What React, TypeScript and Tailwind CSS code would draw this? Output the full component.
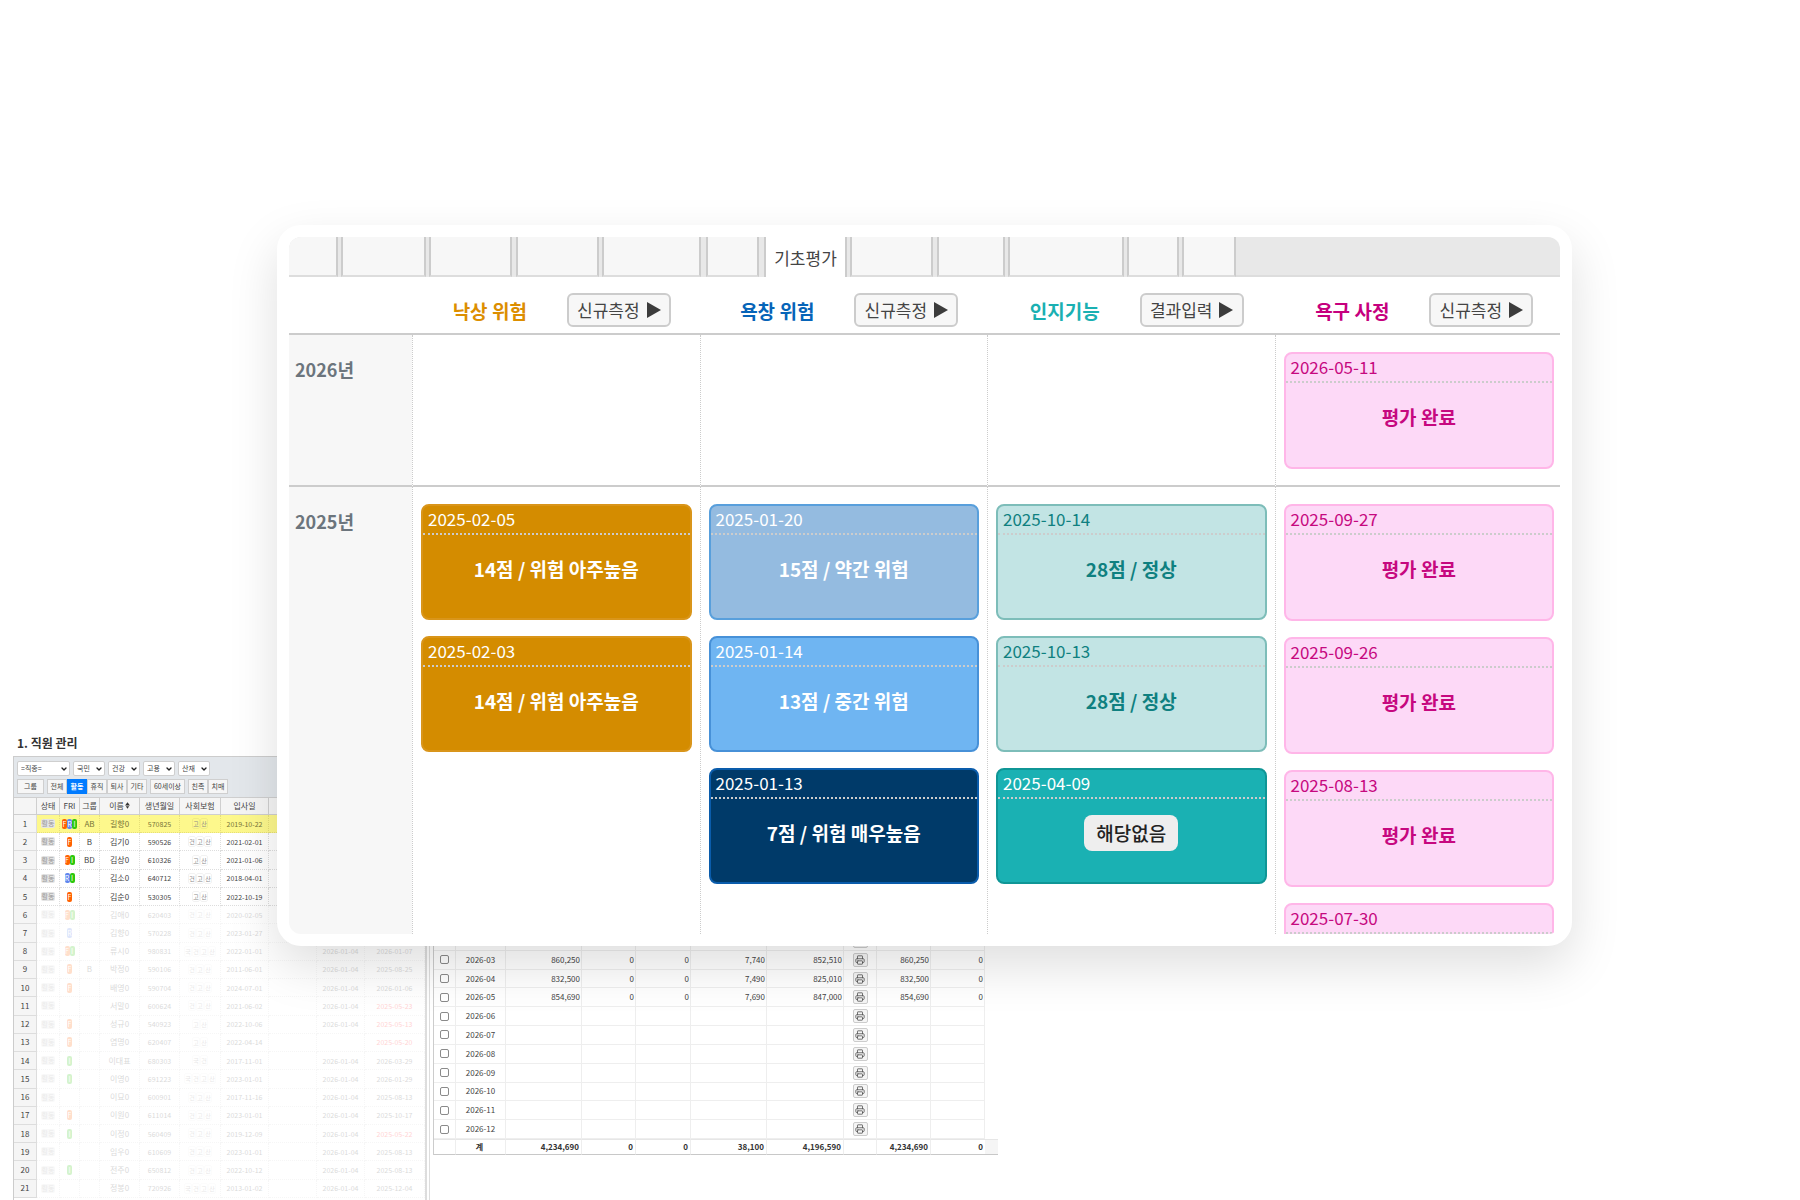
import { ChevronDown, Printer } from 'lucide-react';
import clsx from 'clsx';

const filters = [
  { label: '=직종=', width: 'w-[53px]' },
  { label: '국민', width: 'w-8' },
  { label: '건강', width: 'w-8' },
  { label: '고용', width: 'w-8' },
  { label: '산재', width: 'w-8' },
];

const buttonGroups = [
  [{ label: '그룹', width: 'w-[27px]' }],
  [
    { label: '전체', width: 'w-5' },
    { label: '활동', width: 'w-5', active: true },
    { label: '휴직', width: 'w-5' },
    { label: '퇴사', width: 'w-5' },
    { label: '기타', width: 'w-5' },
  ],
  [{ label: '60세이상', width: 'w-[35px]' }],
  [
    { label: '친족', width: 'w-5' },
    { label: '치매', width: 'w-5' },
  ],
];

// fri, group, name, birth, insurance, joined, checked, renewed
const staff = [
  ['FRI', 'AB', '길향0', '570825', '고산', '2019-10-22', '', ''],
  ['F', 'B', '김기0', '590526', '건고산', '2021-02-01', '', ''],
  ['FI', 'BD', '김상0', '610326', '고산', '2021-01-06', '', ''],
  ['RI', '', '김소0', '640712', '건고산', '2018-04-01', '', ''],
  ['F', '', '김순0', '530305', '고산', '2022-10-19', '', ''],
  ['FI', '', '김애0', '620403', '건고산', '2020-02-05', '', ''],
  ['R', '', '김향0', '570228', '건고산', '2023-01-27', '', ''],
  ['FI', '', '류시0', '980831', '국건고산', '2022-01-01', '2026-01-04', '2026-01-07'],
  ['F', 'B', '박정0', '590106', '건고산', '2011-06-01', '2026-01-04', '2025-08-25'],
  ['F', '', '배영0', '590704', '건고산', '2024-07-01', '2026-01-04', '2026-01-06'],
  ['', '', '서말0', '600624', '건고산', '2021-06-02', '2026-01-04', '2025-05-23'],
  ['F', '', '성규0', '540923', '고산', '2022-10-06', '2026-01-04', '2025-05-13'],
  ['F', '', '염명0', '620407', '고산', '2022-04-14', '', '2025-05-20'],
  ['I', '', '이대표', '680303', '국건', '2017-11-01', '2026-01-04', '2026-03-29'],
  ['I', '', '이영0', '691223', '국건고산', '2023-01-01', '2026-01-04', '2026-01-29'],
  ['', '', '이묘0', '600901', '건고산', '2017-11-16', '2026-01-04', '2025-08-13'],
  ['F', '', '이원0', '611014', '건고산', '2023-01-01', '2026-01-04', '2025-10-17'],
  ['I', '', '이정0', '560409', '건고산', '2019-12-09', '2026-01-04', '2025-05-22'],
  ['', '', '임우0', '610609', '건고산', '2023-01-01', '2026-01-04', '2025-08-13'],
  ['I', '', '전주0', '650812', '건고산', '2022-10-12', '2026-01-04', '2025-08-13'],
  ['', '', '정봉0', '720926', '국건고산', '2013-01-02', '2026-01-04', '2025-12-04'],
];

const months = [
  ['2026-02', '843,620', '0', '0', '7,590', '836,030', '843,620', '0'],
  ['2026-03', '860,250', '0', '0', '7,740', '852,510', '860,250', '0'],
  ['2026-04', '832,500', '0', '0', '7,490', '825,010', '832,500', '0'],
  ['2026-05', '854,690', '0', '0', '7,690', '847,000', '854,690', '0'],
  ['2026-06', '', '', '', '', '', '', ''],
  ['2026-07', '', '', '', '', '', '', ''],
  ['2026-08', '', '', '', '', '', '', ''],
  ['2026-09', '', '', '', '', '', '', ''],
  ['2026-10', '', '', '', '', '', '', ''],
  ['2026-11', '', '', '', '', '', '', ''],
  ['2026-12', '', '', '', '', '', '', ''],
];

const tabs = [
  { width: 'w-[49px]', gap: 'mr-[3px]' },
  { width: 'w-[85px]', gap: 'mr-[3px]' },
  { width: 'w-[83px]', gap: 'mr-1' },
  { width: 'w-[83px]', gap: 'mr-[3px]' },
  { width: 'w-[99px]', gap: 'mr-[5px]' },
  { width: 'w-[53px]', gap: 'mr-[5px]' },
  { width: 'w-[83px]', gap: 'mr-[3px]', label: '기초평가' },
  { width: 'w-[83px]', gap: 'mr-1' },
  { width: 'w-[68px]', gap: 'mr-[3px]' },
  { width: 'w-[116px]', gap: 'mr-[3px]' },
  { width: 'w-[52px]', gap: 'mr-[3px]' },
  { width: 'w-[54px]', gap: '' },
];

const assessments = [
  { title: '낙상 위험', action: '신규측정', color: 'text-[#dc8e00]' },
  { title: '욕창 위험', action: '신규측정', color: 'text-[#0664b8]' },
  { title: '인지기능', action: '결과입력', color: 'text-[#1ab0b2]' },
  { title: '욕구 사정', action: '신규측정', color: 'text-[#c6007e]' },
];

const tones = {
  orange: 'h-[116px] bg-[#d48c00] border-[#d9951a] text-white',
  sky: 'h-[116px] bg-[#94bbe0] border-[#589fdc] text-white',
  blue: 'h-[116px] bg-[#6fb5f2] border-[#4791d8] text-white',
  navy: 'h-[116px] bg-[#003a69] border-[#0a5cab] text-white',
  mint: 'h-[116px] bg-[#c2e4e4] border-[#7dbdb9] text-[#0f8080]',
  teal: 'h-[116px] bg-[#1ab1b3] border-[#0f9696] text-white',
  pink: 'h-[117px] bg-[#fdd9f7] border-[#ffb6e8] text-[#c6087f]',
};

type Result = { date: string; text: string; tone: keyof typeof tones; badge?: boolean };

const years: { year: string; results: Result[][] }[] = [
  { year: '2026년', results: [[], [], [], [{ date: '2026-05-11', text: '평가 완료', tone: 'pink' }]] },
  {
    year: '2025년',
    results: [
      [
        { date: '2025-02-05', text: '14점 / 위험 아주높음', tone: 'orange' },
        { date: '2025-02-03', text: '14점 / 위험 아주높음', tone: 'orange' },
      ],
      [
        { date: '2025-01-20', text: '15점 / 약간 위험', tone: 'sky' },
        { date: '2025-01-14', text: '13점 / 중간 위험', tone: 'blue' },
        { date: '2025-01-13', text: '7점 / 위험 매우높음', tone: 'navy' },
      ],
      [
        { date: '2025-10-14', text: '28점 / 정상', tone: 'mint' },
        { date: '2025-10-13', text: '28점 / 정상', tone: 'mint' },
        { date: '2025-04-09', text: '해당없음', tone: 'teal', badge: true },
      ],
      [
        { date: '2025-09-27', text: '평가 완료', tone: 'pink' },
        { date: '2025-09-26', text: '평가 완료', tone: 'pink' },
        { date: '2025-08-13', text: '평가 완료', tone: 'pink' },
        { date: '2025-07-30', text: '', tone: 'pink' },
      ],
    ],
  },
];

const friColors: Record<string, string> = {
  F: 'bg-[#ff6200]',
  R: 'bg-[#5f86ee]',
  I: 'bg-[#2cc80c]',
};

function StaffRow({ row, index }: { row: string[]; index: number }) {
  const [fri, group, name, birth, insurance, joined, checked, renewed] = row;
  const first = index === 0;
  const fade = index > 4 && 'opacity-20';
  const cell = clsx(
    'border-b border-r border-dotted p-0 text-center',
    first ? 'border-[#e6df78]' : index > 4 ? 'border-[#f6f6f6]' : 'border-[#dddddd]',
  );

  return (
    <tr className={clsx(first && 'bg-[#fdf88c] text-[#777338]')}>
      <th className="border-r border-b border-[#dddddd] bg-[#f5f5f5] p-0 text-[8px] font-normal text-[#444]">{index + 1}</th>
      <td className={cell}>
        <div className={clsx('flex justify-center', fade)}>
          <span className="rounded-xs bg-[#e4e4e4] px-px text-[7px] leading-[9px] text-[#999]">활동</span>
        </div>
      </td>
      <td className={cell}>
        <div className={clsx('flex justify-center', fade)}>
          {fri.split('').map((f) => (
            <span key={f} className={clsx('w-[5px] rounded-xs text-[7px] leading-[10px] text-white', friColors[f])}>{f}</span>
          ))}
        </div>
      </td>
      <td className={cell}><div className={clsx(fade)}>{group}</div></td>
      <td className={cell}><div className={clsx(fade)}>{name}</div></td>
      <td className={clsx(cell, 'text-[7px]')}><div className={clsx(fade)}>{birth}</div></td>
      <td className={cell}>
        <div className={clsx('flex justify-center', fade)}>
          {insurance.split('').map((c) => (
            <span key={c} className="w-[8px] rounded-xs border border-black/5 text-[6px] leading-[9px] text-[#888]">{c}</span>
          ))}
        </div>
      </td>
      <td className={clsx(cell, 'text-[7px]')}><div className={clsx(fade)}>{joined}</div></td>
      <td className={cell} />
      <td className={clsx(cell, 'text-[7px]')}><div className={clsx(fade)}>{checked}</div></td>
      <td className={clsx(cell, 'text-[7px]', renewed.startsWith('2025-05') && 'text-[#ff2020]')}>
        <div className={clsx(fade)}>{renewed}</div>
      </td>
    </tr>
  );
}

function StaffPanel() {
  return (
    <section className="flex w-[412px] shrink-0 flex-col pt-[735px]">
      <div className="flex h-[21px] items-start justify-between pr-[106px] pl-1">
        <h2 className="text-[12px] leading-4 font-bold text-[#333]">1. 직원 관리</h2>
        <button className="h-4 w-9 rounded-xs border border-[#cccccc] bg-[#f5f5f5] text-[7px]">추가</button>
      </div>
      <div className="flex flex-1 flex-col border-t border-l border-[#cccccc]">
        <div className="flex h-10 flex-col gap-[3px] bg-[#e3e7eb] pt-1 pl-[3px] text-[7px]">
          <div className="flex gap-[3px]">
            {filters.map((f) => (
              <span key={f.label} className={clsx('relative', f.width)}>
                <select
                  aria-label={f.label}
                  className="block h-[15px] w-full appearance-none rounded-xs border border-[#cfcfcf] bg-white pl-[3px] text-[#444]"
                >
                  <option>{f.label}</option>
                </select>
                <ChevronDown size={8} strokeWidth={4} className="pointer-events-none absolute top-1 right-0.5 text-[#222]" />
              </span>
            ))}
          </div>
          <div className="flex gap-[3px]">
            {buttonGroups.map((group) => (
              <div key={group[0].label} className="flex">
                {group.map((b: { label: string; width: string; active?: boolean }) => (
                  <button
                    key={b.label}
                    className={clsx(
                      'h-[15px] border whitespace-nowrap',
                      b.width,
                      b.active ? 'border-[#007bff] bg-[#007bff] font-bold text-white' : 'border-[#cfcfcf] bg-[#f6f6f6] text-[#444]',
                    )}
                  >
                    {b.label}
                  </button>
                ))}
              </div>
            ))}
          </div>
        </div>
        <table className="h-[401px] w-full table-fixed border-separate border-spacing-0 text-[8px] leading-[10px] text-[#444]">
          <colgroup>
            <col className="w-[23px]" />
            <col className="w-[23px]" />
            <col className="w-[20px]" />
            <col className="w-[20px]" />
            <col className="w-[40px]" />
            <col className="w-[40px]" />
            <col className="w-[41px]" />
            <col className="w-[48px]" />
            <col className="w-[48px]" />
            <col className="w-[48px]" />
            <col />
          </colgroup>
          <thead>
            <tr className="h-[18px]">
              {['', '상태', 'FRI', '그룹', '이름', '생년월일', '사회보험', '입사일', '', '', ''].map((h, i) => (
                <th key={i} className="border-t border-r border-b border-[#cfcfcf] bg-[#f5f5f5] p-0 font-normal">
                  {h}
                  {h === '이름' && (
                    <svg viewBox="0 0 6 8" className="ml-px inline h-[7px] w-[5px] align-baseline">
                      <path d="M3 0L6 4H0zM1 5H5L3 8z" fill="#333" />
                    </svg>
                  )}
                </th>
              ))}
            </tr>
          </thead>
          <tbody>
            {staff.map((row, i) => (
              <StaffRow key={i} row={row} index={i} />
            ))}
          </tbody>
        </table>
      </div>
    </section>
  );
}

function BillingPanel() {
  const cell = 'border-r border-b border-[#eeeeee] p-0 pr-px text-right';

  return (
    <section className="w-[565px] shrink-0 pt-[932px]">
      <table className="h-[223px] w-full table-fixed border-separate border-spacing-0 border-l border-[#cccccc] text-[8px] leading-[10px] text-[#444]">
        <colgroup>
          <col className="w-[22px]" />
          <col className="w-[50px]" />
          <col className="w-[76px]" />
          <col className="w-[54px]" />
          <col className="w-[55px]" />
          <col className="w-[76px]" />
          <col className="w-[77px]" />
          <col className="w-[33px]" />
          <col className="w-[54px]" />
          <col className="w-[54px]" />
          <col />
        </colgroup>
        <tbody>
          {months.map(([month, ...v]) => (
            <tr key={month}>
              <td className="border-r border-b border-[#eeeeee] p-0">
                <input
                  type="checkbox"
                  aria-label={month}
                  className="mx-auto block size-[9px] appearance-none rounded-xs border border-[#8a8a8a] bg-white"
                />
              </td>
              <th className="border-r border-b border-[#eeeeee] p-0 font-normal">{month}</th>
              {v.slice(0, 5).map((n, i) => (
                <td key={i} className={cell}>{n}</td>
              ))}
              <td className="border-r border-b border-[#eeeeee] p-0">
                <button
                  aria-label="인쇄"
                  className="mx-auto flex h-[14px] w-[15px] items-center justify-center rounded-xs border border-[#cccccc] bg-[#f5f5f5] text-[#555]"
                >
                  <Printer size={10} />
                </button>
              </td>
              <td className={cell}>{v[5]}</td>
              <td className={cell}>{v[6]}</td>
              <td />
            </tr>
          ))}
        </tbody>
        <tfoot>
          <tr className="h-4 font-bold text-[#333]">
            {['', '계', '4,234,690', '0', '0', '38,100', '4,196,590', '', '4,234,690', '0', ''].map((n, i) => (
              <td
                key={i}
                className={clsx(
                  'border-t border-b border-t-[#e6e6e6] border-b-[#c8c8c8] p-0 pr-0.5',
                  i < 9 && 'border-r border-r-[#eeeeee]',
                  i === 10 && 'bg-[#f5f5f5]',
                  i === 1 ? 'text-center' : 'text-right',
                )}
              >
                {n}
              </td>
            ))}
          </tr>
        </tfoot>
      </table>
    </section>
  );
}

function ResultCard({ result }: { result: Result }) {
  return (
    <div className={clsx('flex flex-col rounded-lg border-2', tones[result.tone])}>
      <div className="h-[29px] border-b-2 border-dotted border-[#cccccc] pl-[5px] text-[17px] leading-[26px]">{result.date}</div>
      <div className="flex flex-1 items-center justify-center pb-4 text-[19px] leading-6 font-bold">
        {result.badge ? (
          <span className="rounded-lg bg-[#eeeeee] px-3 py-[6px] font-medium text-[#222]">{result.text}</span>
        ) : (
          result.text
        )}
      </div>
    </div>
  );
}

function AssessmentCard() {
  return (
    <section className="absolute top-[225px] right-[228px] left-[277px] rounded-3xl bg-white p-3 shadow-[0_20px_50px_rgba(0,0,0,0.13)]">
      <div className="h-[697px] overflow-hidden rounded-xl">
        <nav className="flex h-10 bg-[#e8e8e8]">
          {tabs.map((t, i) => (
            <button
              key={i}
              aria-label={t.label ?? `탭 ${i + 1}`}
              className={clsx(
                'h-10 shrink-0 border-r-2 border-[#cccccc] pt-0.5 text-[17px] text-[#444]',
                i > 0 && 'border-l-2',
                t.label ? 'bg-white' : 'border-b-2 border-b-[#dddddd] bg-[#f7f7f7]',
                t.width,
                t.gap,
              )}
            >
              {t.label}
            </button>
          ))}
          <span className="flex-1 border-b-2 border-[#dddddd]" />
        </nav>
        <table className="w-[calc(100%+2px)] table-fixed border-separate border-spacing-0">
          <thead>
            <tr className="h-[58px]">
              <td className="w-[123px] border-b-2 border-[#cccccc]" />
              {assessments.map((a) => (
                <th key={a.title} className="border-b-2 border-[#cccccc] p-0 pt-[10px] pl-3">
                  <div className="flex items-center justify-center gap-10">
                    <span className={clsx('pt-px text-[19px] leading-6 font-bold', a.color)}>{a.title}</span>
                    <button className="flex h-[34px] w-[104px] items-center justify-center gap-[7px] rounded-md border-2 border-[#cccccc] bg-[#f7f7f7] text-[17px] font-normal text-[#444]">
                      {a.action}
                      <svg viewBox="0 0 14 16" className="h-4 w-[14px]">
                        <path d="M0 0L14 8L0 16z" fill="#3c3c3c" />
                      </svg>
                    </button>
                  </div>
                </th>
              ))}
            </tr>
          </thead>
          <tbody className="align-top">
            {years.map((y) => (
              <tr key={y.year}>
                <th className="border-b-2 border-[#cccccc] bg-[#f7f7f7] p-0 pt-[22px] pl-[6px] text-left text-[18px] leading-6 font-bold text-[#6c757d]">
                  {y.year}
                </th>
                {y.results.map((list, i) => (
                  <td key={i} className="border-b-2 border-l border-b-[#cccccc] border-l-[#cccccc] p-0 pt-[17px] pr-2 pb-4 pl-2 [border-left-style:dotted]">
                    <div className="flex flex-col gap-4">
                      {list.map((r) => (
                        <ResultCard key={r.date} result={r} />
                      ))}
                    </div>
                  </td>
                ))}
              </tr>
            ))}
          </tbody>
        </table>
      </div>
    </section>
  );
}

export default function App() {
  return (
    <main className="relative h-screen overflow-hidden bg-white font-['Noto_Sans_CJK_KR',sans-serif]">
      <div className="flex h-full pl-[13px]">
        <StaffPanel />
        <div className="mt-[735px] mr-[3px] w-[5px] shrink-0 border-r border-l-2 border-r-[#dddddd] border-l-[#dddddd]" />
        <BillingPanel />
      </div>
      <AssessmentCard />
    </main>
  );
}
